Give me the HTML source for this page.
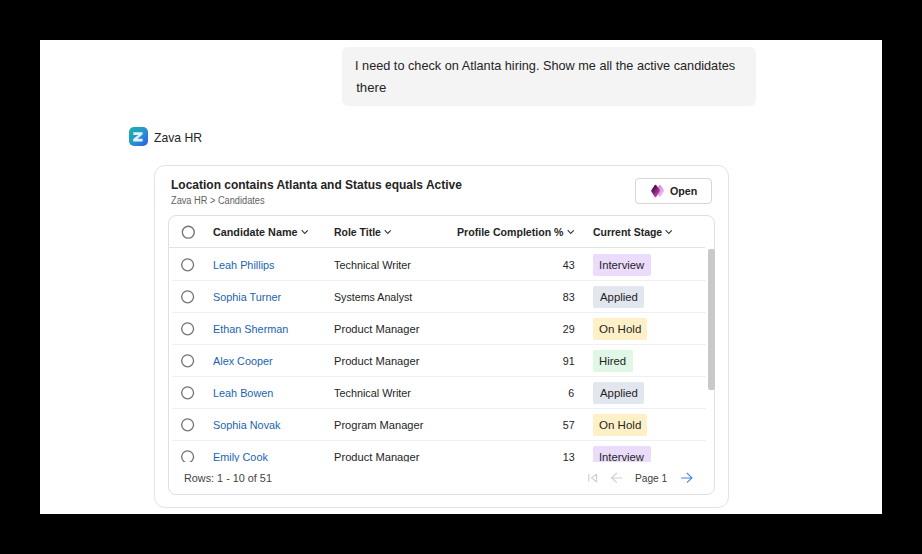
<!DOCTYPE html>
<html><head><meta charset="utf-8"><title>Zava HR</title>
<style>
html,body{margin:0;padding:0;width:922px;height:554px;overflow:hidden;background:#000;}
body{position:relative;font-family:"Liberation Sans",sans-serif;}
.a{position:absolute;box-sizing:border-box;}
.t{position:absolute;white-space:nowrap;}
.panel{left:40px;top:40px;width:842px;height:474px;background:#fff;}
.bubble{left:342px;top:47px;width:414px;height:59px;background:#f4f4f4;border-radius:6px;}
.icon{left:129px;top:127px;width:19px;height:19px;border-radius:5px;background:linear-gradient(135deg,#1ab59c 0%,#2794d2 50%,#2c5ce6 100%);}
.card{left:154px;top:165px;width:575px;height:343px;border:1px solid #e3e3e3;border-radius:11px;}
.btn{left:635px;top:178px;width:77px;height:26px;border:1px solid #d6d6d6;border-radius:4px;}
.tbl{left:167.6px;top:215px;width:547.4px;height:280px;border:1px solid #e0e0e0;border-radius:8px;}
.hl{left:168px;top:247px;width:537px;height:1px;background:#e3e3e3;}
.sep{left:172px;width:534px;height:1px;background:#f0f0f0;}
.radio{width:13px;height:13px;border:1.3px solid #6e6e6e;border-radius:50%;}
.badge{left:593px;height:22px;border-radius:2px;}
.thumb{left:708px;top:249px;width:7px;height:141px;background:#c9c9c9;border-radius:2px;}
.clip{position:absolute;left:0;top:248px;width:922px;height:214px;overflow:hidden;}
.clipin{position:absolute;left:0;top:-248px;width:922px;height:554px;}
</style></head><body>
<div class="a panel"></div>
<div class="a bubble"></div>
<div class="a icon"></div>
<svg class="a" style="left:129px;top:127px" width="19" height="19" viewBox="0 0 19 19"><path d="M4.3 5.3 H13.5 V7.6 L8.4 11.7 H13.6 V14.4 H4.2 V12.1 L9.3 8 H4.3 Z" fill="#e4f1fb"/></svg>
<div class="a card"></div>
<div class="a btn"></div>
<svg class="a" style="left:648px;top:182px" width="20" height="18" viewBox="0 0 20 18">
<defs>
<linearGradient id="pk" x1="0" y1="0" x2="1" y2="1"><stop offset="0" stop-color="#dc6fd4"/><stop offset="1" stop-color="#f6c6f1"/></linearGradient>
<linearGradient id="dk" x1="0.2" y1="0.1" x2="0.8" y2="0.9"><stop offset="0" stop-color="#4a0b4b"/><stop offset="0.55" stop-color="#8a2686"/><stop offset="1" stop-color="#b846b0"/></linearGradient>
</defs>
<path d="M12 4.2 L15 8.7 L12 13.5 L9 8.7 Z" fill="url(#pk)" stroke="url(#pk)" stroke-width="2.2" stroke-linejoin="round"/>
<path d="M7.5 4.1 L10.7 8.8 L7.5 13.9 L4.4 8.9 Z" fill="url(#dk)" stroke="url(#dk)" stroke-width="2.4" stroke-linejoin="round"/>
</svg>
<div class="a tbl"></div>
<div class="a hl"></div>
<svg class="a" style="left:0;top:0" width="922" height="554"><circle cx="188.3" cy="232.2" r="5.95" fill="none" stroke="#757575" stroke-width="1.35"/></svg>

<svg class="a" style="left:300.5px;top:229px" width="8" height="6" viewBox="0 0 8 6"><path d="M0.7 1.2 L3.7 4.5 L6.8 1.3" stroke="#333" stroke-width="1.1" fill="none"/></svg>
<svg class="a" style="left:383.5px;top:229px" width="8" height="6" viewBox="0 0 8 6"><path d="M0.7 1.2 L3.7 4.5 L6.8 1.3" stroke="#333" stroke-width="1.1" fill="none"/></svg>
<svg class="a" style="left:566.6px;top:229px" width="8" height="6" viewBox="0 0 8 6"><path d="M0.7 1.2 L3.7 4.5 L6.8 1.3" stroke="#333" stroke-width="1.1" fill="none"/></svg>
<svg class="a" style="left:664.8px;top:229px" width="8" height="6" viewBox="0 0 8 6"><path d="M0.7 1.2 L3.7 4.5 L6.8 1.3" stroke="#333" stroke-width="1.1" fill="none"/></svg>
<div class="a sep" style="top:280px"></div>
<div class="a sep" style="top:312px"></div>
<div class="a sep" style="top:344px"></div>
<div class="a sep" style="top:376px"></div>
<div class="a sep" style="top:408px"></div>
<div class="a sep" style="top:440px"></div>
<div class="clip"><div class="clipin">
<svg class="a" style="left:0;top:0" width="922" height="554"><circle cx="187.6" cy="264.85" r="5.95" fill="none" stroke="#757575" stroke-width="1.35"/><circle cx="187.6" cy="296.85" r="5.95" fill="none" stroke="#757575" stroke-width="1.35"/><circle cx="187.6" cy="328.85" r="5.95" fill="none" stroke="#757575" stroke-width="1.35"/><circle cx="187.6" cy="360.85" r="5.95" fill="none" stroke="#757575" stroke-width="1.35"/><circle cx="187.6" cy="392.85" r="5.95" fill="none" stroke="#757575" stroke-width="1.35"/><circle cx="187.6" cy="424.85" r="5.95" fill="none" stroke="#757575" stroke-width="1.35"/><circle cx="187.6" cy="456.85" r="5.95" fill="none" stroke="#757575" stroke-width="1.35"/></svg>
<div class="a badge" style="top:254px;width:58px;background:#ebdcfb"></div>
<div class="a badge" style="top:286px;width:51px;background:#e1e6ef"></div>
<div class="a badge" style="top:318px;width:54px;background:#fdf0c6"></div>
<div class="a badge" style="top:350px;width:40px;background:#dff7e4"></div>
<div class="a badge" style="top:382px;width:51px;background:#e1e6ef"></div>
<div class="a badge" style="top:414px;width:54px;background:#fdf0c6"></div>
<div class="a badge" style="top:446px;width:58px;background:#ebdcfb"></div>
<div class="t" id="n0" style="left:213.00px;transform-origin:0 0;transform:scaleX(0.9600);top:259.93px;font-size:11.3px;line-height:11.3px;font-weight:400;color:#1c63b0">Leah Phillips</div>
<div class="t" id="r0" style="left:333.60px;transform-origin:0 0;transform:scaleX(0.9600);top:259.93px;font-size:11.3px;line-height:11.3px;font-weight:400;color:#242424">Technical Writer</div>
<div class="t" id="p0" style="right:347.80px;transform-origin:100% 0;transform:scaleX(0.9450);top:259.93px;font-size:11.3px;line-height:11.3px;font-weight:400;color:#242424">43</div>
<div class="t" id="s0" style="left:598.89px;transform-origin:0 0;transform:scaleX(1.0009);top:259.93px;font-size:11.3px;line-height:11.3px;font-weight:400;color:#242424">Interview</div>
<div class="t" id="n1" style="left:213.00px;transform-origin:0 0;transform:scaleX(0.9600);top:291.93px;font-size:11.3px;line-height:11.3px;font-weight:400;color:#1c63b0">Sophia Turner</div>
<div class="t" id="r1" style="left:333.60px;transform-origin:0 0;transform:scaleX(0.9450);top:291.93px;font-size:11.3px;line-height:11.3px;font-weight:400;color:#242424">Systems Analyst</div>
<div class="t" id="p1" style="right:347.86px;transform-origin:100% 0;transform:scaleX(0.9450);top:291.93px;font-size:11.3px;line-height:11.3px;font-weight:400;color:#242424">83</div>
<div class="t" id="s1" style="left:600.20px;transform-origin:0 0;transform:scaleX(1.0062);top:291.93px;font-size:11.3px;line-height:11.3px;font-weight:400;color:#242424">Applied</div>
<div class="t" id="n2" style="left:213.00px;transform-origin:0 0;transform:scaleX(0.9600);top:323.93px;font-size:11.3px;line-height:11.3px;font-weight:400;color:#1c63b0">Ethan Sherman</div>
<div class="t" id="r2" style="left:333.60px;transform-origin:0 0;transform:scaleX(0.9850);top:323.93px;font-size:11.3px;line-height:11.3px;font-weight:400;color:#242424">Product Manager</div>
<div class="t" id="p2" style="right:347.90px;transform-origin:100% 0;transform:scaleX(0.9450);top:323.93px;font-size:11.3px;line-height:11.3px;font-weight:400;color:#242424">29</div>
<div class="t" id="s2" style="left:599.41px;transform-origin:0 0;transform:scaleX(1.0204);top:323.93px;font-size:11.3px;line-height:11.3px;font-weight:400;color:#242424">On Hold</div>
<div class="t" id="n3" style="left:213.00px;transform-origin:0 0;transform:scaleX(0.9600);top:355.93px;font-size:11.3px;line-height:11.3px;font-weight:400;color:#1c63b0">Alex Cooper</div>
<div class="t" id="r3" style="left:333.60px;transform-origin:0 0;transform:scaleX(0.9850);top:355.93px;font-size:11.3px;line-height:11.3px;font-weight:400;color:#242424">Product Manager</div>
<div class="t" id="p3" style="right:347.56px;transform-origin:100% 0;transform:scaleX(0.9450);top:355.93px;font-size:11.3px;line-height:11.3px;font-weight:400;color:#242424">91</div>
<div class="t" id="s3" style="left:599.13px;transform-origin:0 0;transform:scaleX(1.0041);top:355.93px;font-size:11.3px;line-height:11.3px;font-weight:400;color:#242424">Hired</div>
<div class="t" id="n4" style="left:213.00px;transform-origin:0 0;transform:scaleX(0.9600);top:387.93px;font-size:11.3px;line-height:11.3px;font-weight:400;color:#1c63b0">Leah Bowen</div>
<div class="t" id="r4" style="left:333.60px;transform-origin:0 0;transform:scaleX(0.9600);top:387.93px;font-size:11.3px;line-height:11.3px;font-weight:400;color:#242424">Technical Writer</div>
<div class="t" id="p4" style="right:347.73px;transform-origin:100% 0;transform:scaleX(0.9450);top:387.93px;font-size:11.3px;line-height:11.3px;font-weight:400;color:#242424">6</div>
<div class="t" id="s4" style="left:600.20px;transform-origin:0 0;transform:scaleX(1.0062);top:387.93px;font-size:11.3px;line-height:11.3px;font-weight:400;color:#242424">Applied</div>
<div class="t" id="n5" style="left:213.00px;transform-origin:0 0;transform:scaleX(0.9600);top:419.93px;font-size:11.3px;line-height:11.3px;font-weight:400;color:#1c63b0">Sophia Novak</div>
<div class="t" id="r5" style="left:333.60px;transform-origin:0 0;transform:scaleX(0.9820);top:419.93px;font-size:11.3px;line-height:11.3px;font-weight:400;color:#242424">Program Manager</div>
<div class="t" id="p5" style="right:347.85px;transform-origin:100% 0;transform:scaleX(0.9450);top:419.93px;font-size:11.3px;line-height:11.3px;font-weight:400;color:#242424">57</div>
<div class="t" id="s5" style="left:599.41px;transform-origin:0 0;transform:scaleX(1.0204);top:419.93px;font-size:11.3px;line-height:11.3px;font-weight:400;color:#242424">On Hold</div>
<div class="t" id="n6" style="left:213.00px;transform-origin:0 0;transform:scaleX(0.9600);top:451.93px;font-size:11.3px;line-height:11.3px;font-weight:400;color:#1c63b0">Emily Cook</div>
<div class="t" id="r6" style="left:333.60px;transform-origin:0 0;transform:scaleX(0.9850);top:451.93px;font-size:11.3px;line-height:11.3px;font-weight:400;color:#242424">Product Manager</div>
<div class="t" id="p6" style="right:347.86px;transform-origin:100% 0;transform:scaleX(0.9450);top:451.93px;font-size:11.3px;line-height:11.3px;font-weight:400;color:#242424">13</div>
<div class="t" id="s6" style="left:599.26px;transform-origin:0 0;transform:scaleX(0.9948);top:451.93px;font-size:11.3px;line-height:11.3px;font-weight:400;color:#242424">Interview</div>
</div></div>
<div class="t" id="b1" style="left:355.49px;transform-origin:0 0;transform:scaleX(0.9638);top:58.73px;font-size:13.2px;line-height:13.2px;font-weight:400;color:#242424">I need to check on Atlanta hiring. Show me all the active candidates</div>
<div class="t" id="b2" style="left:356.17px;transform-origin:0 0;top:81.03px;font-size:13.2px;line-height:13.2px;font-weight:400;color:#242424">there</div>
<div class="t" id="zava" style="left:154.37px;transform-origin:0 0;transform:scaleX(0.9371);top:130.50px;font-size:13px;line-height:13px;font-weight:400;color:#242424">Zava HR</div>
<div class="t" id="title" style="left:170.53px;transform-origin:0 0;transform:scaleX(0.9837);top:178.97px;font-size:12.2px;line-height:12.2px;font-weight:700;color:#242424">Location contains Atlanta and Status equals Active</div>
<div class="t" id="crumb" style="left:171.00px;transform-origin:0 0;transform:scaleX(0.9223);top:196.34px;font-size:10px;line-height:10px;font-weight:400;color:#616161">Zava HR &gt; Candidates</div>
<div class="t" id="open" style="left:670.40px;transform-origin:0 0;transform:scaleX(0.9222);top:185.28px;font-size:11.6px;line-height:11.6px;font-weight:700;color:#242424">Open</div>
<div class="t" id="h1" style="left:213.05px;transform-origin:0 0;transform:scaleX(0.9298);top:226.18px;font-size:11.6px;line-height:11.6px;font-weight:700;color:#242424">Candidate Name</div>
<div class="t" id="h2" style="left:334.08px;transform-origin:0 0;transform:scaleX(0.9017);top:226.18px;font-size:11.6px;line-height:11.6px;font-weight:700;color:#242424">Role Title</div>
<div class="t" id="h3" style="left:457.19px;transform-origin:0 0;transform:scaleX(0.9137);top:226.18px;font-size:11.6px;line-height:11.6px;font-weight:700;color:#242424">Profile Completion %</div>
<div class="t" id="h4" style="left:593.06px;transform-origin:0 0;transform:scaleX(0.9020);top:226.18px;font-size:11.6px;line-height:11.6px;font-weight:700;color:#242424">Current Stage</div>
<div class="t" id="rows" style="left:184.20px;transform-origin:0 0;transform:scaleX(0.9589);top:472.63px;font-size:11.3px;line-height:11.3px;font-weight:400;color:#424242">Rows: 1 - 10 of 51</div>
<div class="t" id="page" style="left:635.04px;transform-origin:0 0;transform:scaleX(0.8998);top:472.63px;font-size:11.3px;line-height:11.3px;font-weight:400;color:#424242">Page 1</div>
<div class="a thumb"></div>
<svg class="a" style="left:586px;top:472px" width="13" height="12" viewBox="0 0 13 12">
<path d="M2.8 2 V9.8" stroke="#cdcdcd" stroke-width="1.1" fill="none"/>
<path d="M10.6 2.2 L5.4 5.9 L10.6 9.7 Z" stroke="#cdcdcd" stroke-width="1.1" fill="none" stroke-linejoin="round"/>
</svg>
<svg class="a" style="left:610px;top:472px" width="14" height="12" viewBox="0 0 14 12">
<path d="M12.3 5.9 H1.8 M6.8 1 L1.6 5.9 L6.8 10.7" stroke="#cdcdcd" stroke-width="1.05" fill="none"/>
</svg>
<svg class="a" style="left:680px;top:472px" width="14" height="12" viewBox="0 0 14 12">
<path d="M1.2 5.9 H11.8 M6.9 1 L12 5.9 L6.9 10.7" stroke="#3d86dc" stroke-width="1.05" fill="none"/>
</svg>

</body></html>
